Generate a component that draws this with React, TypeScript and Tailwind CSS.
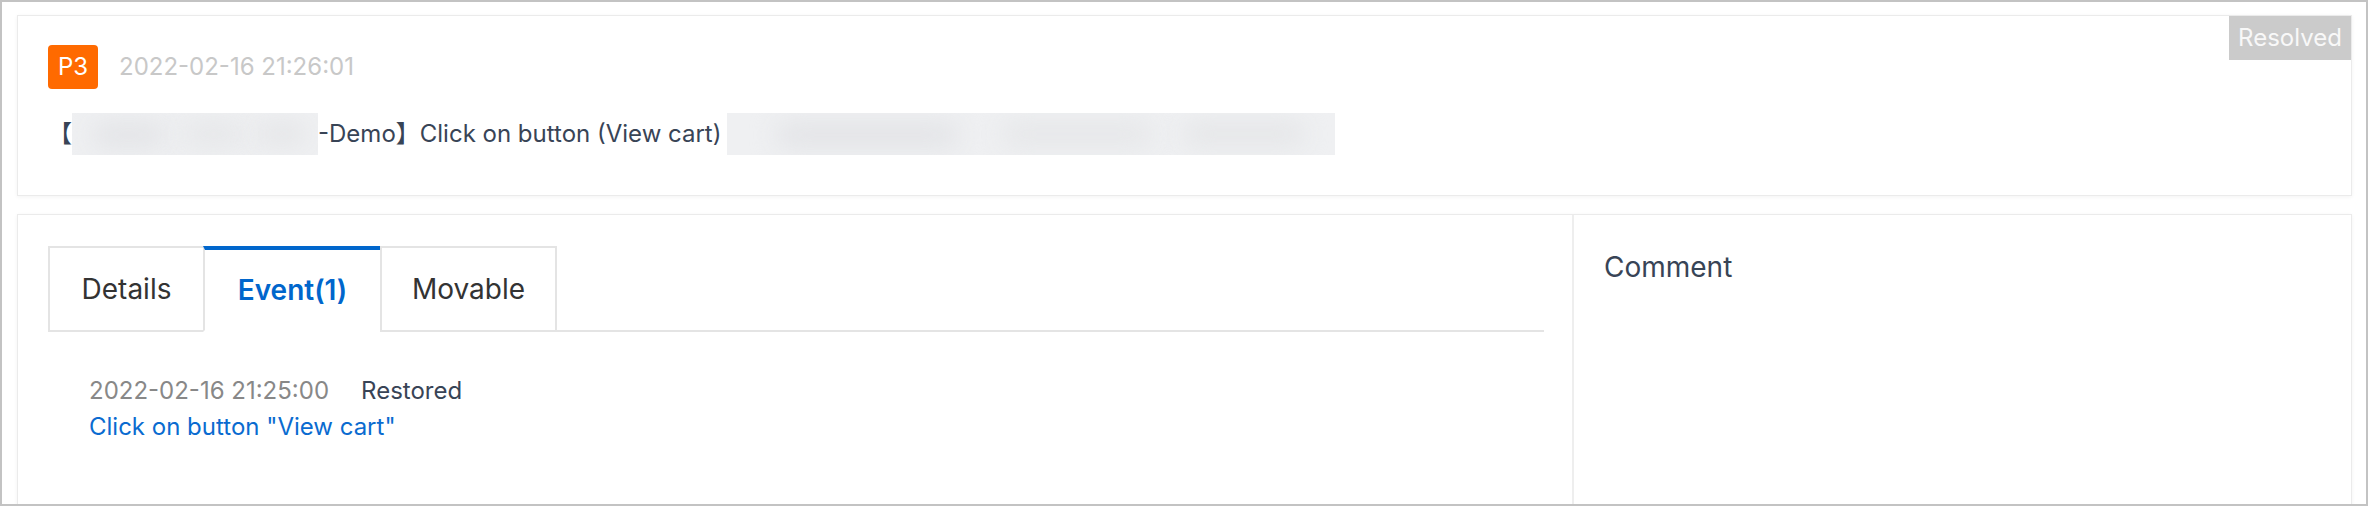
import React from "react";

// Blurred-out placeholder standing in for redacted text.
function Redacted({ width }: { width: number }) {
  return (
    <span
      className="relative inline-block h-[42px] align-middle overflow-hidden bg-[#eff0f2]"
      style={{ width }}
    >
      <span className="absolute left-[8%] top-[10px] h-[24px] w-[30%] rounded-full bg-[#e2e3e6] blur-md" />
      <span className="absolute left-[45%] top-[8px] h-[26px] w-[25%] rounded-full bg-[#e6e7e9] blur-md" />
      <span className="absolute left-[75%] top-[10px] h-[22px] w-[20%] rounded-full bg-[#e4e5e7] blur-md" />
    </span>
  );
}

const tabs = [
  { label: "Details", width: 157, active: false },
  { label: "Event(1)", width: 179, active: true },
  { label: "Movable", width: 177, active: false },
];

export default function App() {
  return (
    <div className="w-[2368px] h-[506px] overflow-hidden border-2 border-[#c3c3c3] bg-white pl-[15px] pr-[14px] pt-[13px] font-['Inter','Noto_Sans_CJK_SC',sans-serif]">
      {/* header card */}
      <div className="relative h-[181px] border border-[#ebebeb] bg-white pl-[30px] pt-[29px] shadow-[0_1px_4px_rgba(0,0,0,0.05)]">
        <div className="flex items-center gap-[21px]">
          <span className="flex h-[44px] w-[50px] items-center justify-center rounded-[4px] bg-[#ff6a00] text-[24px] text-white">
            P3
          </span>
          <span className="text-[24px] leading-[44px] text-[#c8c8c8]">2022-02-16 21:26:01</span>
        </div>
        <div className="mt-[24px] flex items-center whitespace-pre text-[24px] leading-[42px] text-[#384456]">
          <span>【</span>
          <Redacted width={246} />
          <span>-Demo】Click on button (View cart)</span>
          <span className="ml-[6px] inline-flex">
            <Redacted width={608} />
          </span>
        </div>
        <div className="absolute right-0 top-0 flex h-[44px] w-[122px] items-center justify-center bg-[#cbcbcb] text-[24px] text-[#f8f8f8]">
          Resolved
        </div>
      </div>

      {/* body card */}
      <div className="mt-[18px] flex h-[320px] border border-[#ebebeb] bg-white shadow-[0_1px_4px_rgba(0,0,0,0.05)]">
        <div className="flex-1 pl-[30px] pr-[28px] pt-[31px]">
          <div className="flex border-b-2 border-[#e4e4e4]">
            {tabs.map((t, i) => (
              <div
                key={t.label}
                className={
                  t.active
                    ? "-mb-[2px] flex h-[86px] items-center justify-center border-2 border-[#e4e4e4] border-t-4 border-t-[#0066cc] border-b-white bg-white text-[28px] font-semibold text-[#0066cc] -ml-[2px]"
                    : i === 0
                    ? "-mb-[2px] flex h-[86px] items-center justify-center border-2 border-[#e4e4e4] bg-white text-[28px] text-[#333333]"
                    : "-mb-[2px] flex h-[86px] items-center justify-center border-2 border-[#e4e4e4] bg-white text-[28px] text-[#333333] -ml-[2px]"
                }
                style={{ width: t.width }}
              >
                {t.label}
              </div>
            ))}
          </div>
          <div className="ml-[41px] mt-[41px] text-[24px] leading-[36px]">
            <div className="flex gap-[32px]">
              <span className="text-[#888888]">2022-02-16 21:25:00</span>
              <span className="text-[#384456]">Restored</span>
            </div>
            <div className="text-[#0a6bd0]">Click on button "View cart"</div>
          </div>
        </div>
        <div className="w-[779px] border-l-2 border-[#eeeeee] pl-[30px] pt-[32px]">
          <div className="text-[28px] leading-[40px] text-[#384456]">Comment</div>
        </div>
      </div>
    </div>
  );
}
